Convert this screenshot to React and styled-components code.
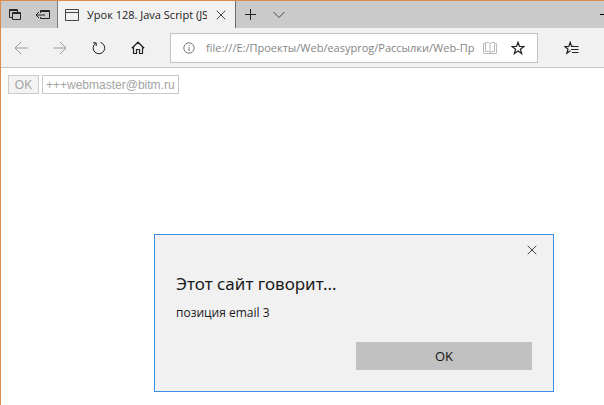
import React, { useState } from "react";
import styled, { createGlobalStyle } from "styled-components";

const GlobalStyle = createGlobalStyle`
  * {
    box-sizing: border-box;
  }
  body {
    margin: 0;
    background: #fff;
    color: #1a1a1a;
    font-family: "Open Sans", "Noto Sans", sans-serif;
    font-size: 12px;
    overflow: hidden;
  }
  button,
  input {
    margin: 0;
    padding: 0;
    font-family: inherit;
    outline: none;
  }
`;

const BrowserWindow = styled.div`
  position: relative;
  min-height: 100vh;
  border-top: 1px solid #dc8c46;
  border-left: 1px solid #dc8c46;
`;

const TabBar = styled.header`
  display: flex;
  height: 27px;
  background: #cacaca;
  overflow: hidden;
`;

const TabTools = styled.div`
  display: flex;
  width: 57px;
  flex-shrink: 0;
  border-right: 1px solid #7c7c7c;
`;

const IconButton = styled.button`
  display: flex;
  align-items: center;
  justify-content: center;
  flex-shrink: 0;
  width: ${({ $width }) => $width}px;
  height: 100%;
  border: 0;
  background: transparent;
  color: ${({ $color }) => $color || "#222"};
`;

const Tab = styled.div`
  display: flex;
  align-items: center;
  flex-shrink: 0;
  width: 178px;
  padding-left: 6px;
  background: #f1f1f1;
  border-right: 1px solid #6c6c6c;
`;

const TabTitle = styled.span`
  flex: 1;
  margin-left: 7px;
  font-size: 11px;
  line-height: 16px;
  white-space: nowrap;
  overflow: hidden;
`;

const WindowControls = styled.div`
  display: flex;
  width: 4px;
  margin-left: auto;
  overflow: hidden;
`;

const Toolbar = styled.nav`
  display: flex;
  align-items: center;
  height: 40px;
  background: #f1f1f1;
  border-bottom: 1px solid #c6c6c6;
`;

const AddressBar = styled.div`
  display: flex;
  align-items: center;
  flex: 1;
  min-width: 0;
  height: 30px;
  margin-left: 13px;
  padding: 0 5px 0 12px;
  background: #fff;
  border: 1px solid #c3c3c3;
`;

const AddressInput = styled.input`
  flex: 1;
  min-width: 0;
  height: 20px;
  margin-left: 11px;
  border: 0;
  background: transparent;
  color: #858585;
  font-size: 11px;
`;

const PageForm = styled.form`
  display: flex;
  gap: 3px;
  padding: 7px;
`;

const PageButton = styled.button`
  width: 31px;
  height: 19px;
  border: 1px solid #ccc;
  background: #f3f3f3;
  color: #a3a3a3;
  font-family: "Liberation Sans", Arial, sans-serif;
  font-size: 12px;
`;

const PageInput = styled.input`
  width: 137px;
  height: 19px;
  padding: 0 3px;
  border: 1px solid #c8c8c8;
  background: #fff;
  color: #a3a3a3;
  font-family: "Liberation Sans", Arial, sans-serif;
  font-size: 12px;
`;

// floats over the page
const Dialog = styled.section`
  position: absolute;
  top: 233px;
  left: 153px;
  width: 400px;
  padding: 0 21px 21px;
  background: #f1f1f1;
  border: 1px solid #3d8fe6;
`;

const DialogHeader = styled.div`
  display: flex;
  justify-content: flex-end;
  height: 30px;
  margin-right: -14px;
`;

const DialogTitle = styled.h1`
  margin: 6px 0 0;
  font-family: "Noto Sans", sans-serif;
  font-size: 17px;
  font-weight: 400;
  line-height: 26px;
`;

const DialogText = styled.p`
  margin: 6px 0 0;
  font-size: 12px;
  line-height: 20px;
`;

const DialogActions = styled.div`
  display: flex;
  justify-content: flex-end;
  margin-top: 19px;
`;

const DialogButton = styled.button`
  width: 176px;
  height: 28px;
  border: 0;
  background: #c1c1c1;
  color: #111;
  font-size: 13px;
`;

const Icon = ({ w = 16, h = 16, children, ...rest }) => (
  <svg
    width={w}
    height={h}
    viewBox={`0 0 ${w} ${h}`}
    fill="none"
    stroke="currentColor"
    aria-hidden="true"
    {...rest}
  >
    {children}
  </svg>
);

const TabsAsideIcon = () => (
  <Icon w={14} h={14}>
    <path d="M4 9.5H1.5v-8h8V4M1 2.5h9" />
    <path d="M4.5 4.5h8v7h-8zM4 5.5h9" />
  </Icon>
);

const SetAsideIcon = () => (
  <Icon w={16} h={14}>
    <path d="M5.5 5V2.5h9v8h-9V9M5 3.5h10" />
    <path d="M10 7H1M4 4L1 7l3 3" />
  </Icon>
);

const PageIcon = () => (
  <Icon w={16} h={14}>
    <path d="M1.5 1.5h13v11h-13zM1 4.5h14" stroke="#444" />
  </Icon>
);

const CloseIcon = () => (
  <Icon w={10} h={10}>
    <path d="M.7.7l8.6 8.6M9.3.7L.7 9.3" stroke="#444" />
  </Icon>
);

const PlusIcon = () => (
  <Icon w={13} h={13}>
    <path d="M6.5 1v11M1 6.5h11" />
  </Icon>
);

const ChevronIcon = () => (
  <Icon w={12} h={8}>
    <path d="M.5 1L6 6.5 11.5 1" stroke="#444" />
  </Icon>
);

const MinusIcon = () => (
  <Icon w={10} h={10}>
    <path d="M0 4.5h10" stroke="#000" />
  </Icon>
);

const BackIcon = () => (
  <Icon w={14} h={14}>
    <path d="M13.5 7H1M7 1L1 7l6 6" />
  </Icon>
);

const ForwardIcon = () => (
  <Icon w={14} h={14}>
    <path d="M.5 7H13M7 1l6 6-6 6" />
  </Icon>
);

const RefreshIcon = () => (
  <Icon w={14} h={14}>
    <path d="M8.5 1.4A5.8 5.8 0 1 1 3.8 2.1" />
    <path d="M1 1.8h3.2V5" />
  </Icon>
);

const HomeIcon = () => (
  <Icon w={14} h={14}>
    <path
      d="M.8 7.3L7 1.2l6.2 6.1M2.5 6v6.5h3v-4h3v4h3V6"
      strokeWidth="1.2"
    />
  </Icon>
);

const InfoIcon = () => (
  <Icon w={12} h={12} stroke="#777">
    <circle cx="6" cy="6" r="5.2" />
    <path d="M6 5v4M6 3v1" />
  </Icon>
);

const BookIcon = () => (
  <Icon w={14} h={14}>
    <path d="M7 2.5v9M2.5 1.5h3L7 2.5l1.5-1h3v9h-3l-1.5 1-1.5-1h-3z" />
    <path d="M2.5 2.5h-2v10h13v-10h-2" />
  </Icon>
);

const StarIcon = () => (
  <Icon w={14} h={14}>
    <path
      d="M7 1.2l1.5 4.2 4.5.1-3.6 2.7 1.3 4.4L7 10l-3.7 2.6 1.3-4.4L1 5.5l4.5-.1z"
      strokeWidth="1.2"
    />
  </Icon>
);

const HubIcon = () => (
  <Icon w={15} h={14}>
    <path
      d="M9.5 5.4H7.6L6.2 1.3 4.8 5.4.9 5.5l3.1 2.7-1.2 4.1 3.6-2.5"
      strokeWidth="1.2"
    />
    <path d="M9 5.5h5.5M7 8.5h7.5M8 11.5h6.5" strokeWidth="1.2" />
  </Icon>
);

const App = () => {
  const [address, setAddress] = useState(
    "file:///E:/Проекты/Web/easyprog/Рассылки/Web-Пр"
  );
  const [email, setEmail] = useState("+++webmaster@bitm.ru");
  const [isOpen, setIsOpen] = useState(true);

  const closeDialog = () => setIsOpen(false);

  const handleSubmit = (e) => {
    e.preventDefault();
    setIsOpen(true);
  };

  return (
    <>
      <GlobalStyle />
      <BrowserWindow>
        <TabBar>
          <TabTools>
            <IconButton $width={28} aria-label="Отложенные вкладки">
              <TabsAsideIcon />
            </IconButton>
            <IconButton $width={28} aria-label="Отложить вкладки">
              <SetAsideIcon />
            </IconButton>
          </TabTools>
          <Tab>
            <PageIcon />
            <TabTitle>Урок 128. Java Script (JS</TabTitle>
            <IconButton $width={28} aria-label="Закрыть вкладку">
              <CloseIcon />
            </IconButton>
          </Tab>
          <IconButton $width={29} aria-label="Новая вкладка">
            <PlusIcon />
          </IconButton>
          <IconButton $width={28} aria-label="Показать вкладки">
            <ChevronIcon />
          </IconButton>
          <WindowControls>
            <IconButton $width={10} aria-label="Свернуть">
              <MinusIcon />
            </IconButton>
          </WindowControls>
        </TabBar>
        <Toolbar>
          <IconButton $width={39} $color="#999" aria-label="Назад">
            <BackIcon />
          </IconButton>
          <IconButton $width={39} $color="#999" aria-label="Вперед">
            <ForwardIcon />
          </IconButton>
          <IconButton $width={39} aria-label="Обновить">
            <RefreshIcon />
          </IconButton>
          <IconButton $width={39} aria-label="Домой">
            <HomeIcon />
          </IconButton>
          <AddressBar>
            <InfoIcon />
            <AddressInput
              aria-label="Адрес"
              value={address}
              onChange={(e) => setAddress(e.target.value)}
            />
            <IconButton $width={28} $color="#bbb" aria-label="Чтение">
              <BookIcon />
            </IconButton>
            <IconButton $width={28} aria-label="Избранное">
              <StarIcon />
            </IconButton>
          </AddressBar>
          <IconButton $width={66} aria-label="Центр">
            <HubIcon />
          </IconButton>
        </Toolbar>
        <PageForm onSubmit={handleSubmit}>
          <PageButton>OK</PageButton>
          <PageInput
            aria-label="Email"
            value={email}
            onChange={(e) => setEmail(e.target.value)}
          />
        </PageForm>
        {isOpen && (
          <Dialog role="alertdialog" aria-labelledby="dialog-title">
            <DialogHeader>
              <IconButton
                $width={28}
                aria-label="Закрыть"
                onClick={closeDialog}
              >
                <CloseIcon />
              </IconButton>
            </DialogHeader>
            <DialogTitle id="dialog-title">Этот сайт говорит...</DialogTitle>
            <DialogText>позиция email 3</DialogText>
            <DialogActions>
              <DialogButton onClick={closeDialog}>OK</DialogButton>
            </DialogActions>
          </Dialog>
        )}
      </BrowserWindow>
    </>
  );
};

export default App;
